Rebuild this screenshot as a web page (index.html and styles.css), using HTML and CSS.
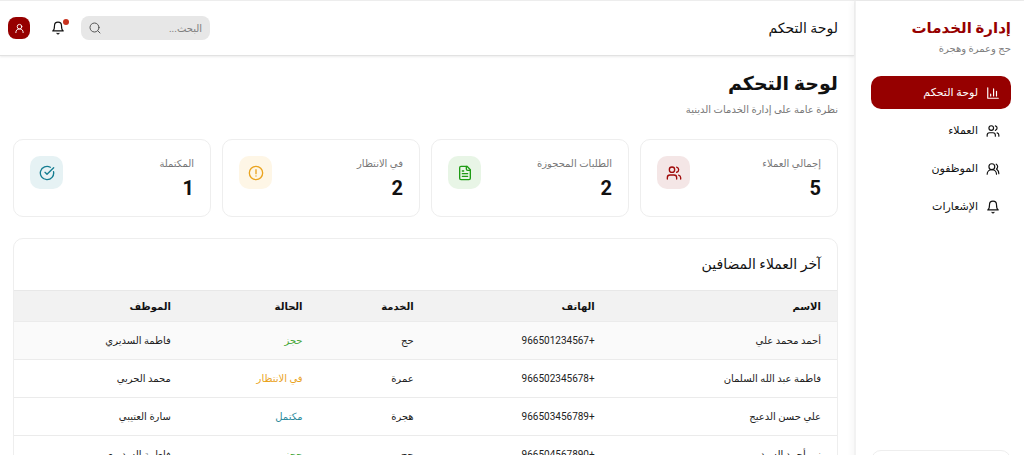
FILE: index.html
```html
<!DOCTYPE html>
<html lang="ar" dir="rtl">
<head>
<meta charset="UTF-8">
<title>إدارة الخدمات</title>
<link rel="stylesheet" href="styles.css">
</head>
<body>
  <div class="layout">

    <!-- Sidebar -->
    <aside class="sidebar">
      <div class="brand">
        <div class="brand-name">إدارة الخدمات</div>
        <div class="brand-sub">حج وعمرة وهجرة</div>
      </div>
      <nav class="nav">
        <a href="#" class="nav-link active">
          <svg class="icon" viewBox="0 0 24 24"><path d="M3 3v18h18M8 17v-3M13 17V5M18 17V9"/></svg>
          <span>لوحة التحكم</span>
        </a>
        <a href="#" class="nav-link">
          <svg class="icon" viewBox="0 0 24 24"><path d="M16 21v-2a4 4 0 0 0-4-4H6a4 4 0 0 0-4 4v2"/><circle cx="9" cy="7" r="4"/><path d="M22 21v-2a4 4 0 0 0-3-3.87M16 3.13a4 4 0 0 1 0 7.75"/></svg>
          <span>العملاء</span>
        </a>
        <a href="#" class="nav-link">
          <svg class="icon" viewBox="0 0 24 24"><path d="M18 21a8 8 0 0 0-16 0"/><circle cx="10" cy="8" r="5"/><path d="M22 20c0-3.37-2-6.5-4-8a5 5 0 0 0-.45-8.3"/></svg>
          <span>الموظفون</span>
        </a>
        <a href="#" class="nav-link">
          <svg class="icon" viewBox="0 0 24 24"><path d="M6 8a6 6 0 0 1 12 0c0 7 3 9 3 9H3s3-2 3-9M10.3 21a1.94 1.94 0 0 0 3.4 0"/></svg>
          <span>الإشعارات</span>
        </a>
      </nav>
      <div class="sidebar-footer"></div>
    </aside>

    <div class="content">
      <!-- Top bar -->
      <header class="topbar">
        <div class="topbar-title">لوحة التحكم</div>
        <div class="topbar-tools">
          <div class="search">
            <input type="text" class="search-input" placeholder="البحث..." aria-label="البحث">
            <svg class="icon search-icon" viewBox="0 0 24 24"><circle cx="11" cy="11" r="9"/><path d="m22 22-4.3-4.3"/></svg>
          </div>
          <button class="bell" aria-label="الإشعارات">
            <svg class="icon" viewBox="0 0 24 24"><path d="M6 8a6 6 0 0 1 12 0c0 7 3 9 3 9H3s3-2 3-9M10.3 21a1.94 1.94 0 0 0 3.4 0"/></svg>
            <span class="dot"></span>
          </button>
          <button class="user" aria-label="الحساب">
            <svg class="icon" viewBox="0 0 24 24"><circle cx="12" cy="8" r="5"/><path d="M20 21a8 8 0 0 0-16 0"/></svg>
          </button>
        </div>
      </header>

      <main class="main">
        <h1>لوحة التحكم</h1>
        <p class="lead">نظرة عامة على إدارة الخدمات الدينية</p>

        <!-- Stats -->
        <section class="stats">
          <div class="card stat">
            <div>
              <div class="stat-label">إجمالي العملاء</div>
              <div class="stat-value">5</div>
            </div>
            <div class="stat-icon red">
              <svg class="icon" viewBox="0 0 24 24"><path d="M16 21v-2a4 4 0 0 0-4-4H6a4 4 0 0 0-4 4v2"/><circle cx="9" cy="7" r="4"/><path d="M22 21v-2a4 4 0 0 0-3-3.87M16 3.13a4 4 0 0 1 0 7.75"/></svg>
            </div>
          </div>
          <div class="card stat">
            <div>
              <div class="stat-label">الطلبات المحجوزة</div>
              <div class="stat-value">2</div>
            </div>
            <div class="stat-icon green">
              <svg class="icon" viewBox="0 0 24 24"><path d="M15 2H6a2 2 0 0 0-2 2v16a2 2 0 0 0 2 2h12a2 2 0 0 0 2-2V7Z"/><path d="M14 2v4a2 2 0 0 0 2 2h4M10 9H8M16 13H8M16 17H8"/></svg>
            </div>
          </div>
          <div class="card stat">
            <div>
              <div class="stat-label">في الانتظار</div>
              <div class="stat-value">2</div>
            </div>
            <div class="stat-icon amber">
              <svg class="icon" viewBox="0 0 24 24"><circle cx="12" cy="12" r="10"/><path d="M12 7v6M12 16.5v.01"/></svg>
            </div>
          </div>
          <div class="card stat">
            <div>
              <div class="stat-label">المكتملة</div>
              <div class="stat-value">1</div>
            </div>
            <div class="stat-icon teal">
              <svg class="icon" viewBox="0 0 24 24"><path d="M21.8 10A10 10 0 1 1 17 3.34"/><path d="m9 11 3 3L22 4"/></svg>
            </div>
          </div>
        </section>

        <!-- Latest clients -->
        <section class="card clients">
          <h2>آخر العملاء المضافين</h2>
          <table>
            <thead>
              <tr>
                <th class="col-name">الاسم</th>
                <th class="col-phone">الهاتف</th>
                <th class="col-service">الخدمة</th>
                <th class="col-status">الحالة</th>
                <th>الموظف</th>
              </tr>
            </thead>
            <tbody>
              <tr class="hover">
                <td>أحمد محمد علي</td>
                <td>+966501234567</td>
                <td>حج</td>
                <td class="booked">حجز</td>
                <td>فاطمة السديري</td>
              </tr>
              <tr>
                <td>فاطمة عبد الله السلمان</td>
                <td>+966502345678</td>
                <td>عمرة</td>
                <td class="waiting">في الانتظار</td>
                <td>محمد الحربي</td>
              </tr>
              <tr>
                <td>علي حسن الدعيج</td>
                <td>+966503456789</td>
                <td>هجرة</td>
                <td class="done">مكتمل</td>
                <td>سارة العتيبي</td>
              </tr>
              <tr>
                <td>نور أحمد السيد</td>
                <td>+966504567890</td>
                <td>حج</td>
                <td class="booked">حجز</td>
                <td>فاطمة السديري</td>
              </tr>
            </tbody>
          </table>
        </section>
      </main>
    </div>

  </div>
</body>
</html>
```
FILE: styles.css
```css
*{box-sizing:border-box;}
body{
  margin:0;
  font-family:Roboto,'DejaVu Sans',sans-serif;
  font-size:10px;
  color:#111;
  background:#fff;
  height:100vh;
  overflow:hidden;
}
.layout{
  display:flex;
  height:calc(100vh + 40px);
  border-top:1px solid #eee;
}
.icon{
  width:14px;height:14px;
  flex:none;
  fill:none;
  stroke:currentColor;
  stroke-width:2;
  stroke-linecap:round;
  stroke-linejoin:round;
}
button{font:inherit;border:0;padding:0;background:none;cursor:pointer;}

/* sidebar */
.sidebar{
  flex:none;
  display:flex;
  flex-direction:column;
  width:170px;
  padding:14px 13px 12px 15px;
  border-left:2px solid #f2f2f2;
  box-shadow:0 0 8px rgba(0,0,0,.06);
}
.brand-name{font-size:15px;line-height:26px;font-weight:bold;color:#960000;}
.brand-sub{font-size:10px;line-height:16px;color:#808080;}
.nav{display:flex;flex-direction:column;gap:5px;margin-top:19px;}
.nav-link{
  display:flex;
  align-items:center;
  gap:8px;
  height:33px;
  padding:0 11px;
  border-radius:10px;
  font-size:11px;
  color:#111;
  text-decoration:none;
}
.nav-link.active{background:#960000;color:#fff;}
.sidebar-footer{
  margin-top:auto;
  height:33px;
  border:1px solid #eee;
  border-radius:10px;
}

/* top bar */
.content{flex:1;min-width:0;}
.topbar{
  display:flex;
  justify-content:space-between;
  align-items:center;
  height:55px;
  padding:0 16px 0 8px;
  border-bottom:1px solid #e2e2e2;
  box-shadow:0 1px 2px rgba(0,0,0,.08);
}
.topbar-title{font-size:14px;}
.topbar-tools{display:flex;align-items:center;}
.search{position:relative;}
.search-input{
  width:129px;height:24px;
  padding:0 8px 0 28px;
  border:0;
  border-radius:8px;
  background:#e7e7e7;
  font:inherit;
}
.search-input::placeholder{color:#808080;}
.search-icon{
  position:absolute;
  left:8px;top:6px;
  width:12px;height:12px;
  color:#555;
}
.bell{position:relative;display:flex;margin:0 16px 0 21px;color:#111;}
.dot{
  position:absolute;
  top:-2px;right:-4px;
  width:6px;height:6px;
  border-radius:50%;
  background:#c8321e;
}
.user{
  display:flex;
  align-items:center;
  justify-content:center;
  width:22px;height:22px;
  border-radius:8px;
  background:#960000;
  color:#fff;
}
.user .icon{width:11px;height:11px;}

/* page */
.main{padding:12px 16px 0 13px;}
h1{margin:0;font-size:19px;line-height:32px;color:#111;}
.lead{margin:0;font-size:10px;line-height:20px;color:#777;}
.card{border:1px solid #eee;border-radius:10px;}
.stats{
  display:grid;
  grid-template-columns:repeat(4,1fr);
  gap:11px;
  margin-top:19px;
}
.stat{
  display:flex;
  justify-content:space-between;
  align-items:flex-start;
  height:78px;
  padding:16px;
}
.stat-label{font-size:10px;line-height:16px;color:#777;}
.stat-value{font-size:20px;line-height:32px;font-weight:bold;}
.stat-icon{
  display:flex;
  align-items:center;
  justify-content:center;
  width:33px;height:33px;
  border-radius:10px;
}
.stat-icon .icon{width:16px;height:16px;}
.red{background:#f4e6e6;color:#a00a0a;}
.green{background:#e8f5e6;color:#1e9b14;}
.amber{background:#fef6e6;color:#eaa31e;}
.teal{background:#e6f2f4;color:#147d91;}

/* clients table */
.clients{margin-top:21px;overflow:hidden;}
h2{
  margin:0;
  padding:0 16px;
  font-size:14px;
  line-height:51px;
  font-weight:normal;
}
table{width:100%;border-collapse:collapse;table-layout:fixed;}
th,td{
  padding:0 16px;
  text-align:right;
  border-bottom:1px solid #ebebeb;
  white-space:nowrap;
}
th{
  height:31px;
  background:#f2f2f2;
  border-top:1px solid #e8e8e8;
}
td{height:38px;color:#222;}
.hover td{background:#fafafa;}
.col-name{width:27.5%;}
.col-phone{width:22%;}
.col-service{width:13.5%;}
.col-status{width:16%;}
td.booked{color:#4aa83c;}
td.waiting{color:#eaa31e;}
td.done{color:#2d8a9c;}
```
